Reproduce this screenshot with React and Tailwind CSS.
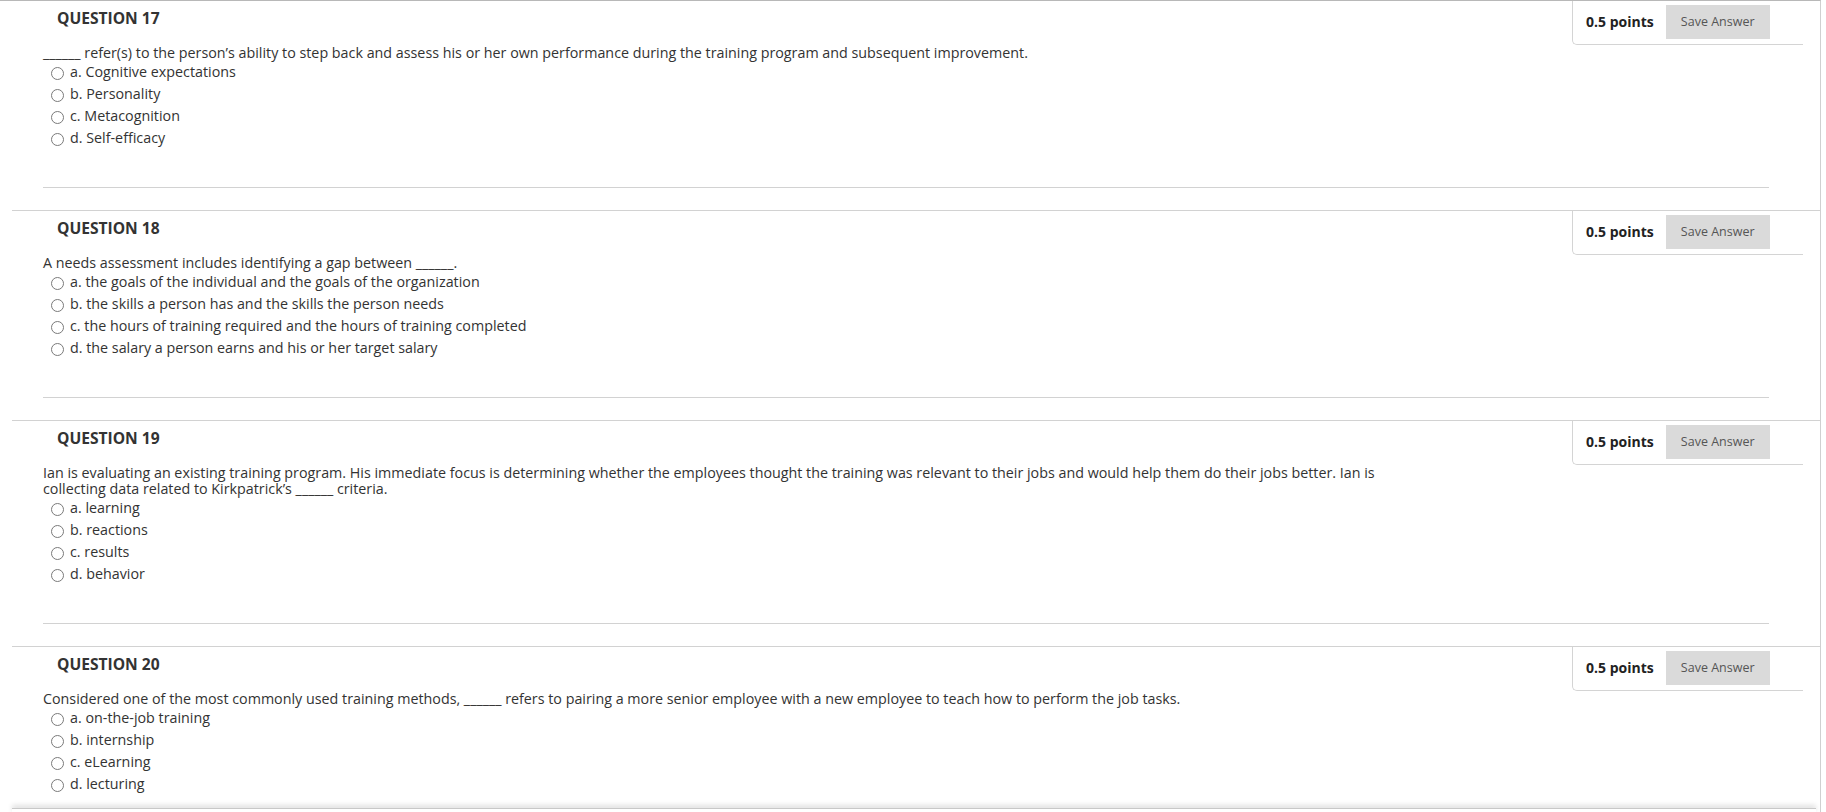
import React from "react";

const questions = [
  {
    n: 17,
    text: [<>______ refer(s) to the person’s ability to step back and assess his or her own performance during the training program and subsequent improvement.</>],
    options: ["a. Cognitive expectations", "b. Personality", "c. Metacognition", "d. Self-efficacy"],
  },
  {
    n: 18,
    text: [<>A needs assessment includes identifying a gap between ______.</>],
    options: [
      "a. the goals of the individual and the goals of the organization",
      "b. the skills a person has and the skills the person needs",
      "c. the hours of training required and the hours of training completed",
      "d. the salary a person earns and his or her target salary",
    ],
  },
  {
    n: 19,
    text: [
      <>Ian is evaluating an existing training program. His immediate focus is determining whether the employees thought the training was relevant to their jobs and would help them do their jobs better. Ian is</>,
      <>collecting data related to Kirkpatrick’s ______ criteria.</>,
    ],
    options: ["a. learning", "b. reactions", "c. results", "d. behavior"],
  },
  {
    n: 20,
    text: [<>Considered one of the most commonly used training methods, ______ refers to pairing a more senior employee with a new employee to teach how to perform the job tasks.</>],
    options: ["a. on-the-job training", "b. internship", "c. eLearning", "d. lecturing"],
  },
];

function Question({ q, first, last }) {
  return (
    <section className={`ml-[12px] ${first ? "" : "border-t border-[#d2d2d2]"}`}>
      <div className="flex justify-between items-start">
        <h3 className="pl-[45px] pt-[7px] text-[15.6px] leading-[20px] font-bold text-[#333]">
          QUESTION {q.n}
        </h3>
        <div className="mr-[17px] w-[231px] h-[44px] border-l border-b border-[#d4d4d4] rounded-bl-[5px] pl-[13px] pt-[4px] flex items-start">
          <div className="flex items-center h-[34px] gap-[12px]">
            <span className="text-[14px] font-bold text-[#222] leading-[20px]">0.5 points</span>
            <button className="w-[104px] h-[34px] bg-[#dadada] text-[12.5px] text-[#555] leading-[34px] text-center">
              Save Answer
            </button>
          </div>
        </div>
      </div>
      <div className="pl-[31px]">
        <p className="text-[14.3px] leading-[16px] text-[#333]">
          {q.text.map((t, i) => (
            <React.Fragment key={i}>
              {i > 0 && <br />}
              {t}
            </React.Fragment>
          ))}
        </p>
        <ul>
          {q.options.map((o) => (
            <li key={o} className="h-[22px] flex items-center pl-[8px] gap-[6px] text-[14.3px] text-[#333]">
              <span className="w-[13px] h-[13px] rounded-full border border-[#7a7a7a] bg-white shrink-0 mt-[2px]" />
              <span className="leading-[16px]">{o}</span>
            </li>
          ))}
        </ul>
      </div>
      {!last ? (
        <div className="mt-[38px] mb-[22px] ml-[31px] mr-[51px] border-t border-[#d2d2d2]" />
      ) : (
        <div className="mt-[13px] mr-[4px] border-t border-[#c8c8c8] h-[6px] shadow-[0_-3px_5px_rgba(0,0,0,0.12)]" />
      )}
    </section>
  );
}

export default function App() {
  return (
    <div
      className="w-[1821px] h-[812px] overflow-hidden bg-white border-t border-r border-[#b8b8b8] border-r-[#d0d0d0]"
      style={{ fontFamily: '"Open Sans", "Liberation Sans", sans-serif' }}
    >
      {questions.map((q, i) => (
        <Question key={q.n} q={q} first={i === 0} last={i === questions.length - 1} />
      ))}
    </div>
  );
}
